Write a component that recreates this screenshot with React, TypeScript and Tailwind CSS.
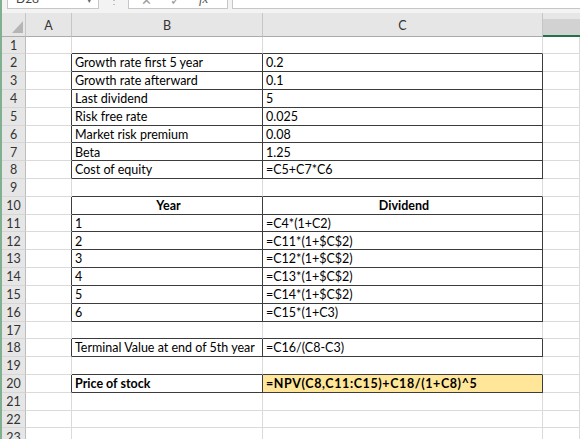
type Row = {
  b?: string;
  c?: string;
  bold?: boolean;
  center?: boolean;
  fill?: boolean;
};

const rows: Row[] = [
  {},
  { b: "Growth rate first 5 year", c: "0.2" },
  { b: "Growth rate afterward", c: "0.1" },
  { b: "Last dividend", c: "5" },
  { b: "Risk free rate", c: "0.025" },
  { b: "Market risk premium", c: "0.08" },
  { b: "Beta", c: "1.25" },
  { b: "Cost of equity", c: "=C5+C7*C6" },
  {},
  { b: "Year", c: "Dividend", bold: true, center: true },
  { b: "1", c: "=C4*(1+C2)" },
  { b: "2", c: "=C11*(1+$C$2)" },
  { b: "3", c: "=C12*(1+$C$2)" },
  { b: "4", c: "=C13*(1+$C$2)" },
  { b: "5", c: "=C14*(1+$C$2)" },
  { b: "6", c: "=C15*(1+C3)" },
  {},
  { b: "Terminal Value at end of 5th year", c: "=C16/(C8-C3)" },
  {},
  { b: "Price of stock", c: "=NPV(C8,C11:C15)+C18/(1+C8)^5", bold: true, fill: true },
  {},
  {},
  {},
];

// B..C ranges with all borders
function boxed(r: number, col: number) {
  if (col !== 1 && col !== 2) return false;
  return (r >= 2 && r <= 8) || (r >= 10 && r <= 16) || r === 18 || r === 20;
}

function Cell({ r, col, row }: { r: number; col: number; row: Row }) {
  const rightDark = boxed(r, col) || boxed(r, col + 1);
  const bottomDark = boxed(r, col) || boxed(r + 1, col);
  const text = col === 1 ? row.b : col === 2 ? row.c : undefined;
  const yellow = col === 2 && row.fill;
  return (
    <div
      className={[
        "flex items-center overflow-hidden whitespace-nowrap border-r border-b pt-[2px] pl-[3px] text-[12.5px] leading-none text-black",
        rightDark ? "border-r-[#3c3c3c]" : "border-r-[#dadada]",
        bottomDark ? "border-b-[#3c3c3c]" : "border-b-[#dadada]",
        yellow ? "bg-[#ffe699] tracking-[0.6px]" : "bg-white",
        row.bold && text ? "font-bold" : "",
        row.center ? "justify-center" : "",
      ].join(" ")}
    >
      {text}
    </div>
  );
}

export default function App() {
  return (
    <div className="flex h-[439px] w-[580px] overflow-hidden bg-white font-['Lato','Liberation_Sans',sans-serif]">
      <div className="w-[2px] shrink-0 bg-[#80b08f]" />
      <div className="flex min-w-0 flex-1 flex-col">
        {/* formula bar, cut at top */}
        <div className="flex h-[13px] shrink-0 bg-[#f3f3f3] text-[12px] text-[#444]">
          <div className="ml-[5px] flex h-[9px] w-[92px] items-start justify-between overflow-hidden border border-t-0 border-[#c6c6c6] bg-white pl-[8px] pr-[6px]">
            <span className="-mt-[7px] leading-[12px]">D28</span>
            <span className="-mt-[6px] text-[9px] leading-[12px] text-[#666]">▾</span>
          </div>
          <div className="ml-[13px] flex h-[9px] w-[4px] items-start justify-center overflow-hidden">
            <span className="-mt-[6px] text-[10px] leading-[12px] text-[#999]">⋮</span>
          </div>
          <div className="ml-[12px] flex h-[9px] w-[100px] items-start overflow-hidden border border-t-0 border-[#c6c6c6] bg-white pl-[12px] text-[#9a9a9a]">
            <span className="-mt-[6px] text-[13px] leading-[12px]">✕</span>
            <span className="ml-[18px] -mt-[6px] text-[13px] leading-[12px]">✓</span>
            <span className="ml-[18px] -mt-[7px] font-['Liberation_Serif',serif] text-[13px] italic leading-[12px] text-[#555]">fx</span>
          </div>
          <div className="ml-[4px] h-[9px] flex-1 border border-t-0 border-r-0 border-[#c6c6c6] bg-white" />
        </div>

        <div className="grid grid-cols-[24px_46px_191px_280px_1fr] grid-rows-[23.5px_repeat(23,17.82px)]">
          {/* header row */}
          <div className="flex items-end justify-end border-r border-b border-r-[#c6c6c6] border-b-[#ababab] bg-[#e6e6e6] pr-[2px] pb-[3px]">
            <svg width="11" height="12" viewBox="0 0 11 12">
              <polygon points="11,0 11,12 0,12" fill="#b5b5b5" />
            </svg>
          </div>
          {["A", "B", "C"].map((h) => (
            <div
              key={h}
              className="flex items-center justify-center border-r border-b border-r-[#c6c6c6] border-b-[#ababab] bg-[#e6e6e6] pt-[4px] text-[12.5px] leading-none text-[#333]"
            >
              {h}
            </div>
          ))}
          <div className="flex flex-col bg-[#e6e6e6]">
            <div className="mt-[6px] flex-1 border-b-2 border-b-[#217346] bg-[#d2d2d2]" />
          </div>

          {rows.map((row, i) => {
            const r = i + 1;
            return [
              <div
                key={`h${r}`}
                className="flex items-center justify-center border-r border-b border-r-[#bdbdbd] border-b-[#d6d6d6] bg-[#e6e6e6] pt-[2px] text-[12.5px] leading-none text-[#333]"
              >
                {r}
              </div>,
              ...[0, 1, 2, 3].map((col) => <Cell key={`${r}-${col}`} r={r} col={col} row={row} />),
            ];
          })}
        </div>
      </div>
    </div>
  );
}
